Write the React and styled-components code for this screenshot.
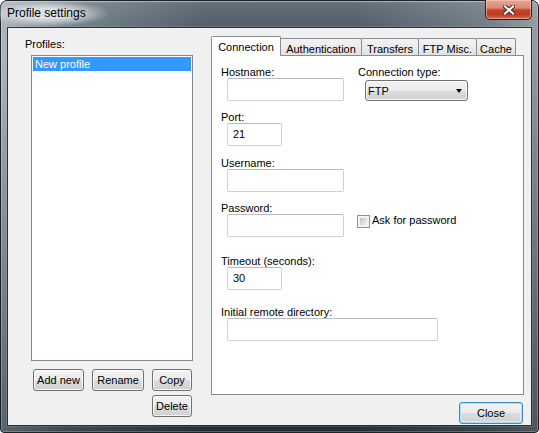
import React from "react";
import styled, { createGlobalStyle } from "styled-components";

const GlobalStyle = createGlobalStyle`
  html, body { margin: 0; padding: 0; background: #ffffff; }
  body {
    font-family: "Liberation Sans", Arial, sans-serif;
    font-size: 11px;
    color: #000;
  }
  * { box-sizing: border-box; }
`;

const Window = styled.div`
  width: 539px;
  height: 433px;
  display: flex;
  flex-direction: column;
  padding: 0 6px 6px 6px;
  border: 1px solid #1b232a;
  border-radius: 7px 7px 4px 4px;
  background:
    linear-gradient(180deg, rgba(255,255,255,0.35) 0px, rgba(255,255,255,0.08) 2px, rgba(255,255,255,0) 26px),
    linear-gradient(180deg, rgba(28,38,46,0) 0%, rgba(28,38,46,0) 15%, rgba(28,38,46,0.55) 100%),
    linear-gradient(90deg, rgba(196,204,209,0.8) 0%, rgba(150,161,168,0.55) 12%, rgba(80,93,104,0) 38%, rgba(80,93,104,0) 66%, rgba(150,160,167,0.45) 90%, rgba(175,183,188,0.7) 100%),
    linear-gradient(180deg, #56636d 0%, #3c4954 35%, #2e3a45 100%);
  box-shadow: inset 0 0 0 1px rgba(255,255,255,0.22);
`;

const TitleBar = styled.div`
  flex: none;
  height: 26px;
  display: flex;
  align-items: flex-start;
  justify-content: space-between;
`;

const Caption = styled.span`
  margin: -1px 0 0 -24px;
  padding: 6px 24px 6px;
  font-size: 12px;
  line-height: 15px;
  color: #000;
  background: radial-gradient(ellipse closest-side, rgba(226,231,234,0.92) 35%, rgba(214,220,224,0.6) 65%, rgba(200,208,213,0.25) 85%, rgba(200,208,213,0) 100%);
`;

const CaptionClose = styled.div`
  width: 47px;
  height: 20px;
  margin-top: -1px;
  display: flex;
  align-items: center;
  justify-content: center;
  border: 1px solid #3d1a12;
  border-top: none;
  border-radius: 0 0 5px 5px;
  background: linear-gradient(180deg, #e8a795 0%, #da8a76 42%, #c6442c 52%, #c03a21 75%, #d46a50 100%);
  box-shadow: inset 0 0 0 1px rgba(255, 205, 195, 0.55);
`;

const Client = styled.div`
  flex: 1;
  display: flex;
  border: 1px solid #25303a;
  background: #f0f0f0;
  box-shadow: 0 0 0 1px rgba(255,255,255,0.12);
`;

const LeftCol = styled.div`
  width: 203px;
  flex: none;
  display: flex;
  flex-direction: column;
  padding: 10px 0 0 17px;
`;

const Label = styled.div`
  line-height: ${(p) => p.$lh || 11}px;
  white-space: nowrap;
`;

const ListBox = styled.div`
  margin: 5px 0 0 6px;
  width: 162px;
  height: 306px;
  border: 1px solid #828790;
  background: #ffffff;
  padding: 1px;
`;

const ListItem = styled.div`
  height: 14px;
  line-height: 14px;
  padding-left: 2px;
  background: ${(p) => (p.$selected ? "#3399ff" : "transparent")};
  color: ${(p) => (p.$selected ? "#ffffff" : "#000000")};
`;

const ButtonGrid = styled.div`
  margin: 8px 0 0 8px;
  display: grid;
  grid-template-columns: 51px 52px 40px;
  grid-auto-rows: 22px;
  column-gap: 8px;
  row-gap: 4px;
`;

const Button = styled.button`
  grid-column: ${(p) => p.$col || "auto"};
  width: ${(p) => (p.$w ? `${p.$w}px` : "auto")};
  height: 22px;
  padding: 0;
  margin: 0;
  font: inherit;
  line-height: 20px;
  color: #000;
  text-align: center;
  border: 1px solid ${(p) => (p.$default ? "#3c8dcb" : "#707070")};
  border-radius: 3px;
  background: linear-gradient(180deg, #f2f2f2 0%, #ebebeb 50%, #dddddd 51%, #cfcfcf 100%);
  box-shadow: ${(p) =>
    p.$default
      ? "inset 0 0 0 1px #9fdcf9, inset 0 0 0 2px rgba(255,255,255,0.45)"
      : "inset 0 0 0 1px rgba(255,255,255,0.8)"};
`;

const RightCol = styled.div`
  flex: 1;
  display: flex;
  flex-direction: column;
  padding: 8px 7px 0 0;
`;

const TabStrip = styled.div`
  height: 19px;
  display: flex;
  align-items: flex-end;
`;

const Tab = styled.div`
  position: relative;
  z-index: ${(p) => (p.$active ? 2 : 1)};
  width: ${(p) => p.$w}px;
  height: ${(p) => (p.$active ? 20 : 17)}px;
  margin-bottom: ${(p) => (p.$active ? -1 : 0)}px;
  padding-top: 4px;
  line-height: 12px;
  text-align: center;
  white-space: nowrap;
  border: 1px solid #898c95;
  border-bottom: none;
  border-radius: 2px 2px 0 0;
  background: ${(p) =>
    p.$active ? "#ffffff" : "linear-gradient(180deg, #f3f3f3 0%, #ebebeb 50%, #e2e2e2 100%)"};
  & + & { margin-left: -1px; }
`;

const Panel = styled.div`
  height: 340px;
  border: 1px solid #898c95;
  background: #ffffff;
  padding: 11px 0 0 9px;
  display: flex;
  flex-direction: column;
`;

const FieldRow = styled.div`
  display: flex;
  margin-top: ${(p) => p.$mt || 0}px;
`;

const Field = styled.div`
  display: flex;
  flex-direction: column;
  width: ${(p) => (p.$w ? `${p.$w}px` : "auto")};
`;

const ControlRow = styled.div`
  display: flex;
  align-items: flex-start;
`;

const TextBox = styled.div`
  width: ${(p) => p.$w}px;
  height: 23px;
  margin-left: 6px;
  padding: 0 5px;
  line-height: 21px;
  border: 1px solid #cdd1d7;
  border-top-color: #b8bcc3;
  border-radius: 2px;
  background: #ffffff;
`;

const Select = styled.div`
  width: 103px;
  height: 21px;
  margin: 2px 0 0 7px;
  padding: 0 5px 0 2px;
  display: flex;
  align-items: center;
  justify-content: space-between;
  line-height: 12px;
  border: 1px solid #707070;
  border-radius: 3px;
  background: linear-gradient(180deg, #f2f2f2 0%, #ebebeb 50%, #dddddd 51%, #cfcfcf 100%);
  box-shadow: inset 0 0 0 1px rgba(255,255,255,0.8);
`;

const Arrow = styled.span`
  width: 0;
  height: 0;
  border-left: 3.5px solid transparent;
  border-right: 3.5px solid transparent;
  border-top: 4px solid #000;
  margin-top: 1px;
`;

const CheckItem = styled.div`
  display: flex;
  align-items: flex-start;
  margin-left: 13px;
`;

const CheckBox = styled.span`
  width: 13px;
  height: 13px;
  margin-top: 1px;
  border: 1px solid #8e8f8f;
  padding: 2px;
  background:
    linear-gradient(135deg, #b8bdc3 0%, #dfe1e3 60%, #f2f2f2 100%) content-box,
    #f4f4f4;
`;

const CheckText = styled.span`
  margin-left: 2px;
  line-height: 12px;
`;

const Footer = styled.div`
  display: flex;
  justify-content: flex-end;
  margin-top: 7px;
  padding-right: 1px;
`;

const CloseGlyph = () => (
  <svg width="12" height="10" viewBox="0 0 12 10">
    <path d="M2 1.5 L10 8.5 M10 1.5 L2 8.5" stroke="#4b2720" strokeWidth="4.2" strokeLinecap="square" fill="none" />
    <path d="M2 1.5 L10 8.5 M10 1.5 L2 8.5" stroke="#ffffff" strokeWidth="2.2" strokeLinecap="square" fill="none" />
  </svg>
);

const tabs = [
  { label: "Connection", w: 70, active: true },
  { label: "Authentication", w: 82 },
  { label: "Transfers", w: 58 },
  { label: "FTP Misc.", w: 59 },
  { label: "Cache", w: 40 },
];

export default function App() {
  return (
    <>
      <GlobalStyle />
      <Window>
        <TitleBar>
          <Caption>Profile settings</Caption>
          <CaptionClose>
            <CloseGlyph />
          </CaptionClose>
        </TitleBar>
        <Client>
          <LeftCol>
            <Label $lh={12}>Profiles:</Label>
            <ListBox>
              <ListItem $selected>New profile</ListItem>
            </ListBox>
            <ButtonGrid>
              <Button>Add new</Button>
              <Button>Rename</Button>
              <Button>Copy</Button>
              <Button $col={3}>Delete</Button>
            </ButtonGrid>
          </LeftCol>
          <RightCol>
            <TabStrip>
              {tabs.map((t) => (
                <Tab key={t.label} $w={t.w} $active={t.active}>
                  {t.label}
                </Tab>
              ))}
            </TabStrip>
            <Panel>
              <FieldRow>
                <Field $w={137}>
                  <Label>Hostname:</Label>
                  <TextBox $w={117} />
                </Field>
                <Field>
                  <Label>Connection type:</Label>
                  <Select>
                    <span>FTP</span>
                    <Arrow />
                  </Select>
                </Field>
              </FieldRow>
              <FieldRow $mt={11}>
                <Field>
                  <Label>Port:</Label>
                  <TextBox $w={55}>21</TextBox>
                </Field>
              </FieldRow>
              <FieldRow $mt={12}>
                <Field>
                  <Label>Username:</Label>
                  <TextBox $w={117} />
                </Field>
              </FieldRow>
              <FieldRow $mt={11}>
                <Field>
                  <Label>Password:</Label>
                  <ControlRow>
                    <TextBox $w={117} />
                    <CheckItem>
                      <CheckBox />
                      <CheckText>Ask for password</CheckText>
                    </CheckItem>
                  </ControlRow>
                </Field>
              </FieldRow>
              <FieldRow $mt={19}>
                <Field>
                  <Label>Timeout (seconds):</Label>
                  <TextBox $w={55}>30</TextBox>
                </Field>
              </FieldRow>
              <FieldRow $mt={17}>
                <Field>
                  <Label>Initial remote directory:</Label>
                  <TextBox $w={211} />
                </Field>
              </FieldRow>
            </Panel>
            <Footer>
              <Button $w={64} $default>Close</Button>
            </Footer>
          </RightCol>
        </Client>
      </Window>
    </>
  );
}
